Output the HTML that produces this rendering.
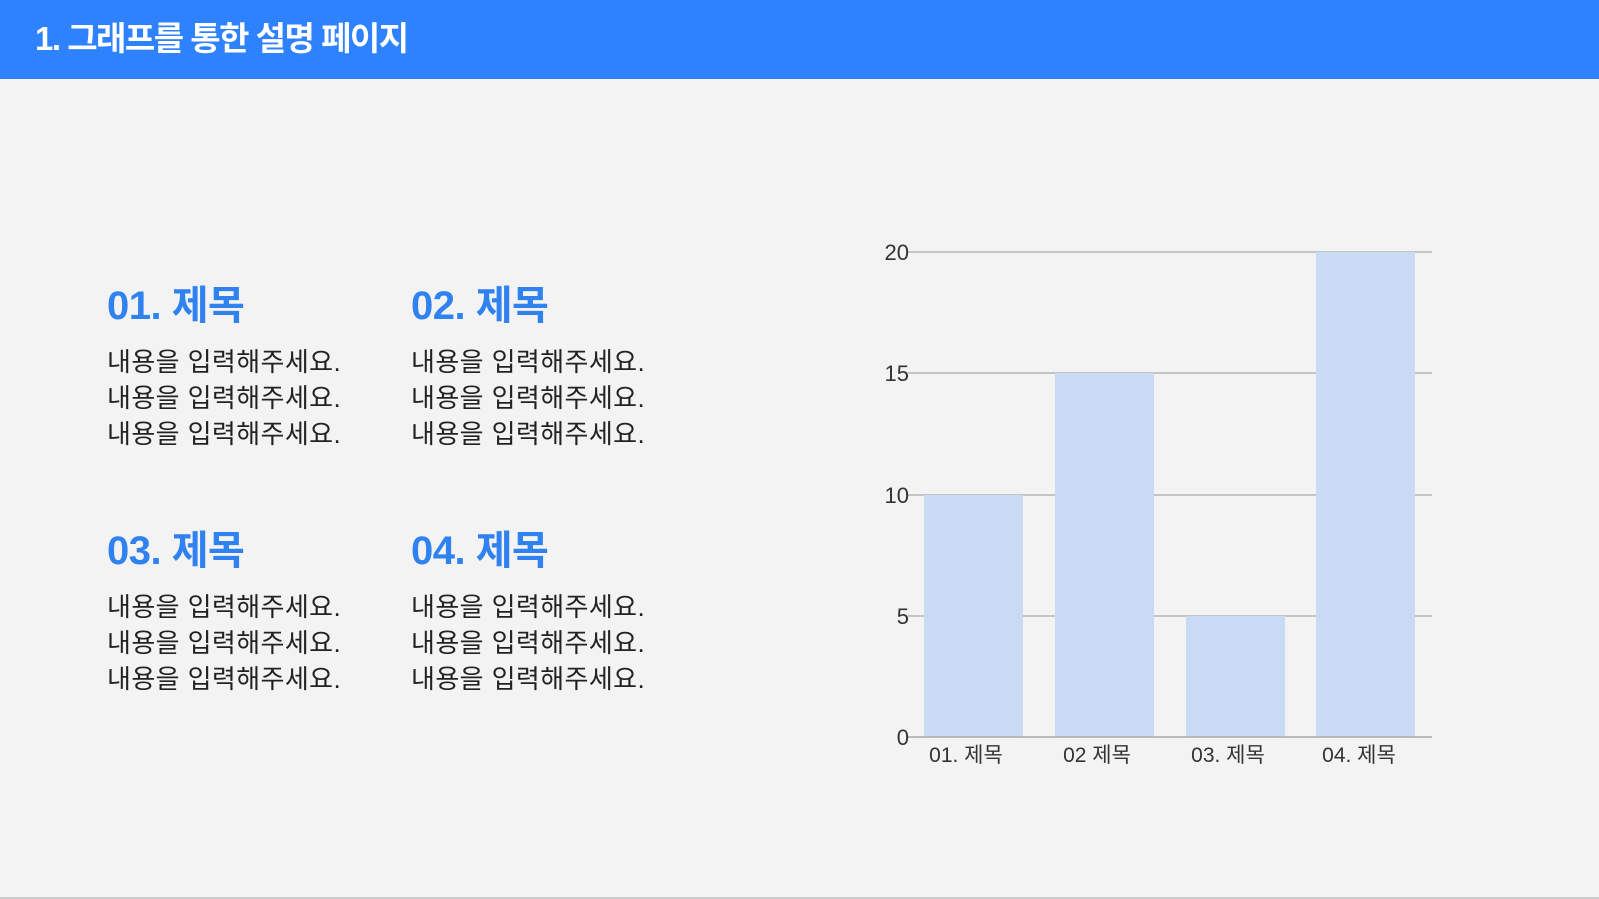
<!DOCTYPE html>
<html><head><meta charset="utf-8"><style>
body{margin:0;width:1599px;height:899px;background:#f3f3f3;position:relative;overflow:hidden;font-family:"Liberation Sans","Noto Sans CJK KR",sans-serif}
.hd{position:absolute;left:0;top:0;width:1599px;height:79px;background:#2f82fd}
.hd span{position:absolute;left:35px;top:12px;color:#fff;font-size:33px;font-weight:bold;letter-spacing:-1.5px}
.h{position:absolute;color:#2f82f0;font-size:40px;font-weight:bold;letter-spacing:-0.5px;line-height:1}
.b{position:absolute;color:#222;font-size:26px;line-height:36px;letter-spacing:0.4px}
.bl{position:absolute;left:0;top:897px;width:1599px;height:2px;background:#ccc}
</style></head><body>
<div class="hd"><span>1. 그래프를 통한 설명 페이지</span></div>
<div class="h" style="left:107px;top:286px">01. 제목</div>
<div class="h" style="left:411px;top:286px">02. 제목</div>
<div class="h" style="left:107px;top:531px">03. 제목</div>
<div class="h" style="left:411px;top:531px">04. 제목</div>
<div class="b" style="left:107px;top:344px">내용을 입력해주세요.<br>내용을 입력해주세요.<br>내용을 입력해주세요.</div>
<div class="b" style="left:411px;top:344px">내용을 입력해주세요.<br>내용을 입력해주세요.<br>내용을 입력해주세요.</div>
<div class="b" style="left:107px;top:589px">내용을 입력해주세요.<br>내용을 입력해주세요.<br>내용을 입력해주세요.</div>
<div class="b" style="left:411px;top:589px">내용을 입력해주세요.<br>내용을 입력해주세요.<br>내용을 입력해주세요.</div>
<svg style="position:absolute;left:0;top:0" width="1599" height="899">
<g stroke="#b5b5b5" stroke-width="1.5">
<line x1="908" y1="252" x2="1432" y2="252"/><line x1="908" y1="373" x2="1432" y2="373"/>
<line x1="908" y1="495" x2="1432" y2="495"/><line x1="908" y1="616" x2="1432" y2="616"/>
</g>
<g fill="#c9dbf4">
<rect x="924" y="495" width="99" height="242"/>
<rect x="1055" y="373" width="99" height="364"/>
<rect x="1186" y="616" width="99" height="121"/>
<rect x="1316" y="252" width="99" height="485"/>
</g>
<line x1="908" y1="737" x2="1432" y2="737" stroke="#aaa" stroke-width="1.5"/>
<g font-family="Liberation Sans, Noto Sans CJK KR, sans-serif" font-size="22" fill="#333" text-anchor="end">
<text x="909" y="260">20</text><text x="909" y="381">15</text><text x="909" y="503">10</text><text x="909" y="624">5</text><text x="909" y="745">0</text>
</g>
<g font-family="Liberation Sans, Noto Sans CJK KR, sans-serif" font-size="21" fill="#333" text-anchor="middle">
<text x="966" y="762">01. 제목</text><text x="1097" y="762">02 제목</text><text x="1228" y="762">03. 제목</text><text x="1359" y="762">04. 제목</text>
</g>
</svg>
<div class="bl"></div>
</body></html>
